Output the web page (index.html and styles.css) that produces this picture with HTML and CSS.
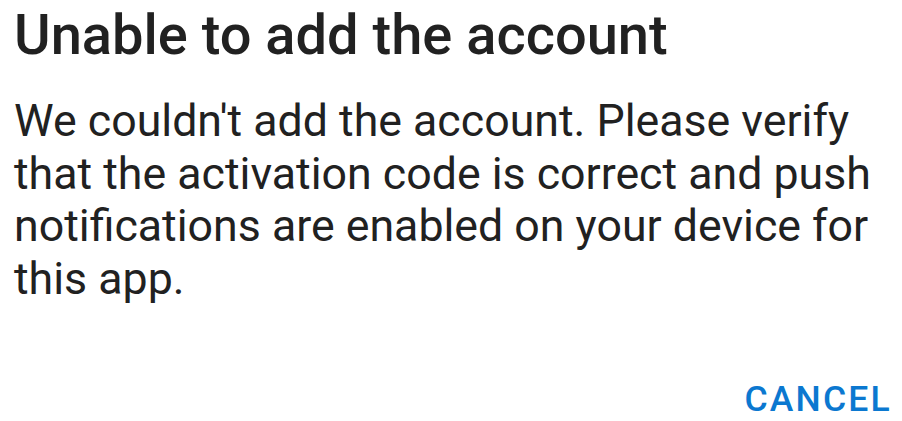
FILE: index.html
```html
<!DOCTYPE html>
<html lang="en">
<head>
    <meta charset="UTF-8">
    <title>Unable to add the account</title>
    <link rel="stylesheet" href="styles.css">
</head>
<body>
<div class="dialog">
    <h1 class="title">Unable to add the account</h1>
    <p class="message">We couldn't add the account. Please verify that the activation code is correct and push notifications are enabled on your device for this app.</p>
    <div class="actions">
        <span class="btn">CANCEL</span>
    </div>
</div>
</body>
</html>
```
FILE: styles.css
```css
*{
    margin: 0;
    padding: 0;
}
body{
    background: #fff;
    font-family: Roboto, "Liberation Sans", sans-serif;
    color: #212121;
}
.dialog{
    width: 902px;
    height: 421px;
    display: flex;
    flex-direction: column;
    padding: 0 10px 0 14px;
    box-sizing: border-box;
}
.title{
    font-size: 56px;
    font-weight: 500;
    line-height: 70px;
}
.message{
    font-size: 44.7px;
    line-height: 52.5px;
    margin-top: 25px;
}
.actions{
    margin-top: auto;
    display: flex;
    justify-content: flex-end;
    padding-bottom: 0;
}
.btn{
    font-size: 35.5px;
    font-weight: 500;
    letter-spacing: 2.2px;
    color: #0b78d0;
    line-height: 44px;
}
```
